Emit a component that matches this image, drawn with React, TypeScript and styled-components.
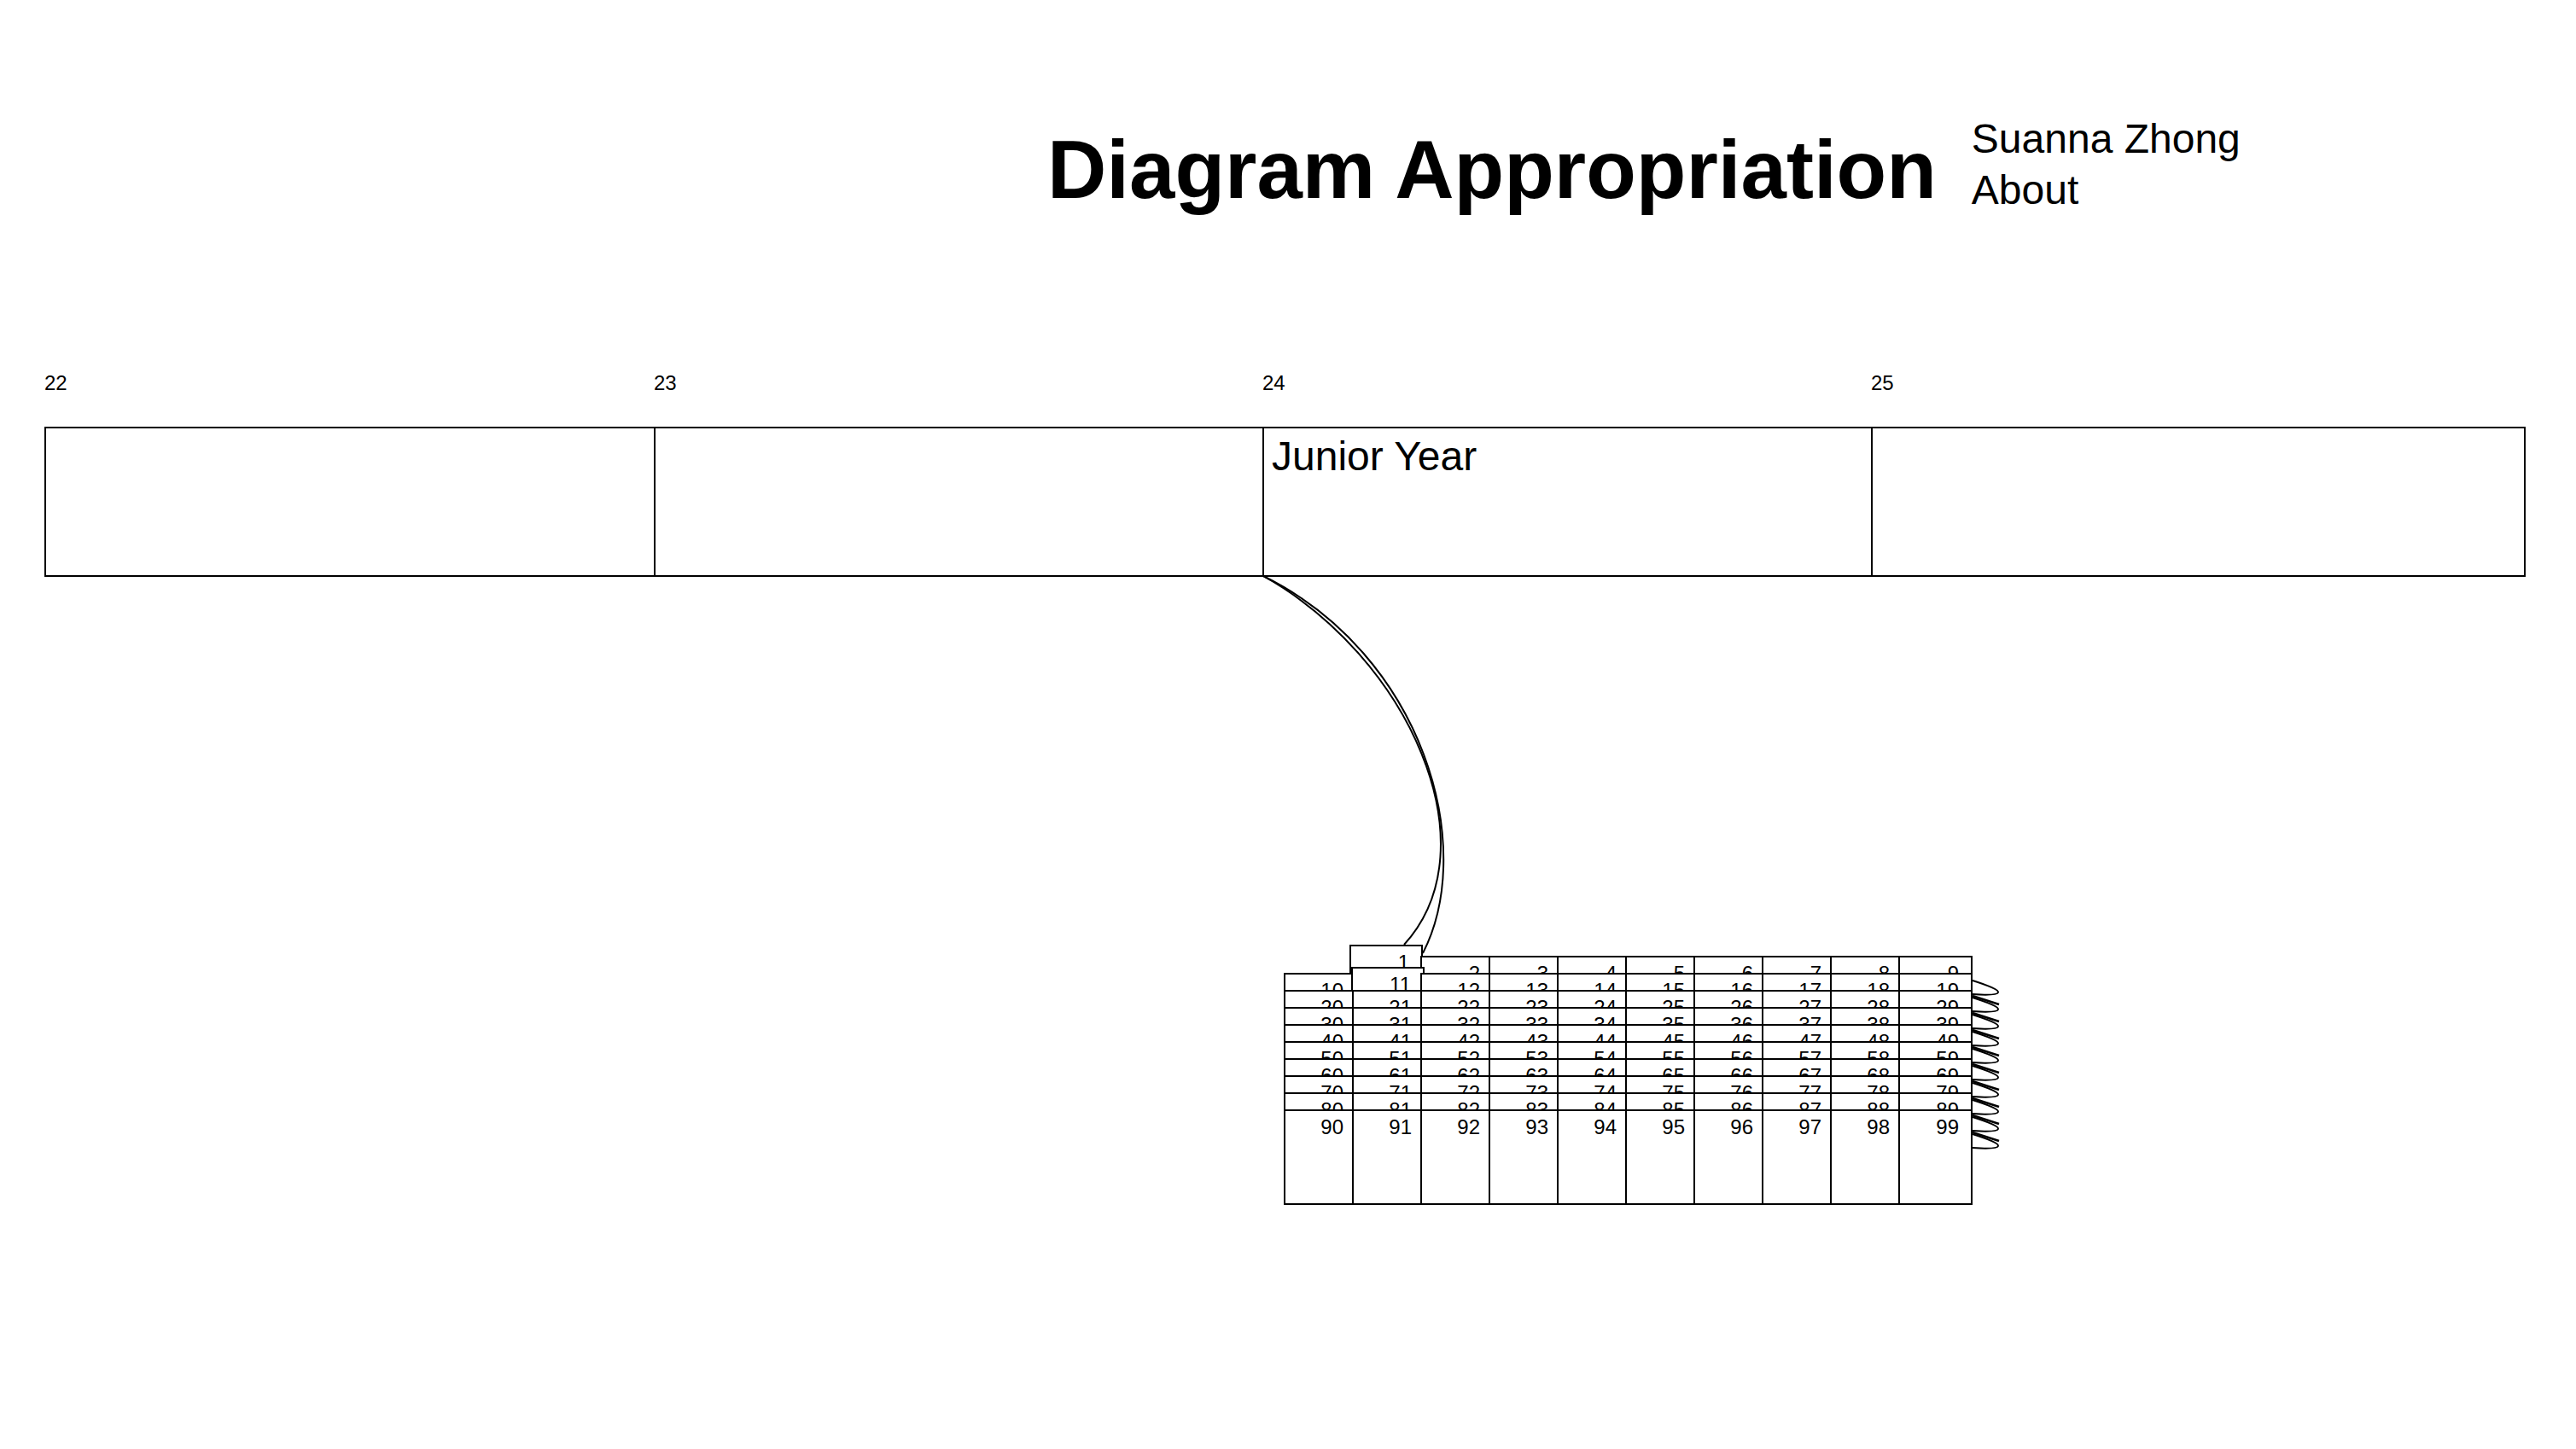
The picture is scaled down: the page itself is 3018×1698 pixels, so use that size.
import React from "react";
import styled, { createGlobalStyle } from "styled-components";

const Global = createGlobalStyle`
  html, body { margin: 0; padding: 0; background: #fff; }
  body { font-family: "Liberation Sans", Arial, sans-serif; color: #000; overflow: hidden; }
`;

const Page = styled.div`
  position: relative;
  width: 3018px;
  height: 1698px;
  overflow: hidden;
`;

const Header = styled.header`
  display: flex;
  align-items: flex-start;
  gap: 41px;
  padding: 132px 0 0 1227px;
  height: 303px;
  box-sizing: border-box;
`;

const Title = styled.h1`
  margin: 12px 0 0;
  font-size: 96px;
  font-weight: 700;
  line-height: 110px;
  white-space: nowrap;
`;

const Nav = styled.nav`
  display: flex;
  flex-direction: column;
  margin-top: 1px;
  font-size: 48px;
  line-height: 60px;
`;

const Timeline = styled.section`
  display: grid;
  grid-template-columns: 714px 713px 713px 767px;
  margin: 0 0 0 52px;
  padding-top: 132px;
`;

const YearColumn = styled.div`
  display: flex;
  flex-direction: column;
`;

const YearLabel = styled.div`
  height: 65px;
  font-size: 24px;
`;

const YearBox = styled.div<{ $last?: boolean }>`
  box-sizing: border-box;
  height: 176px;
  border: 2px solid #000;
  margin-right: ${(p) => (p.$last ? "0" : "-2px")};
  padding: 5px 9px;
  font-size: 48px;
`;

const Grid = styled.section`
  margin: 444px 0 0 1504px;
  display: flex;
  flex-direction: column;
`;

const Row = styled.div`
  display: flex;
  height: 20px;
`;

const Cell = styled.div<{ $last?: boolean; $hidden?: boolean; $shift?: string }>`
  position: relative;
  flex: none;
  box-sizing: border-box;
  width: ${(p) => (p.$last ? "87px" : "86px")};
  height: 112px;
  margin-right: -6px;
  padding: 5px 14px 0 0;
  border: 2px solid #000;
  background: #fff;
  font-size: 24px;
  text-align: right;
  visibility: ${(p) => (p.$hidden ? "hidden" : "visible")};
  transform: ${(p) => p.$shift ?? "none"};
`;

const Overlay = styled.svg`
  position: absolute;
  left: 0;
  top: 0;
  pointer-events: none;
`;

const shifts: Record<number, string> = {
  1: "translate(-3px, -13px)",
  11: "translate(-1px, -7px)",
};

const years = [
  { n: 22 },
  { n: 23 },
  { n: 24, text: "Junior Year" },
  { n: 25 },
];

const loops = Array.from({ length: 10 }, (_, i) => 1149 + i * 20);

export default function App() {
  return (
    <Page>
      <Global />
      <Header>
        <Title>Diagram Appropriation</Title>
        <Nav>
          <span>Suanna Zhong</span>
          <span>About</span>
        </Nav>
      </Header>
      <Timeline>
        {years.map((y, i) => (
          <YearColumn key={y.n}>
            <YearLabel>{y.n}</YearLabel>
            <YearBox $last={i === years.length - 1}>{y.text}</YearBox>
          </YearColumn>
        ))}
      </Timeline>
      <Grid>
        {Array.from({ length: 10 }, (_, r) => (
          <Row key={r}>
            {Array.from({ length: 10 }, (_, c) => {
              const n = r * 10 + c;
              return (
                <Cell key={c} $last={c === 9} $hidden={n === 0} $shift={shifts[n]}>
                  {n}
                </Cell>
              );
            })}
          </Row>
        ))}
      </Grid>
      <Overlay width="3018" height="1698" viewBox="0 0 3018 1698" fill="none" stroke="#000" strokeWidth="2">
        <path d="M1480 675 C1650 770 1750 992 1645 1107" />
        <path d="M1480 675 C1668 768 1731 992 1667 1117" />
        {loops.map((y, i) => (
          <g key={y}>
            <path d={`M2311 ${y} C2330 ${y + 6} 2342 ${y + 11} 2341 ${y + 14} C2340 ${y + 17} 2325 ${y + 17} 2311 ${y + 16}`} />
            {i > 0 && <path d={`M2311 ${y - 2} L2342 ${y + 8}`} strokeWidth="2.5" />}
          </g>
        ))}
      </Overlay>
    </Page>
  );
}
